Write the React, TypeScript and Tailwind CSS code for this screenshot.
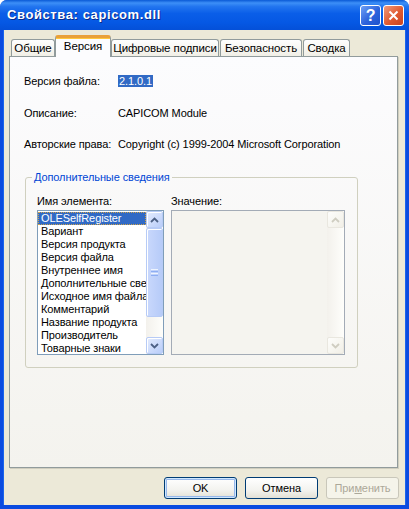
import type { ReactNode } from "react";

const tabs = [
  { label: "Общие", w: "w-[44px]" },
  { label: "Версия", w: "w-[56px]", active: true },
  { label: "Цифровые подписи", w: "w-[108px]" },
  { label: "Безопасность", w: "w-[82px]" },
  { label: "Сводка", w: "w-[47px]" },
];

const items = [
  "OLESelfRegister",
  "Вариант",
  "Версия продукта",
  "Версия файла",
  "Внутреннее имя",
  "Дополнительные сведения",
  "Исходное имя файла",
  "Комментарий",
  "Название продукта",
  "Производитель",
  "Товарные знаки",
];

function Chevron({ up, color }: { up?: boolean; color: string }) {
  return (
    <svg width="9" height="6" viewBox="0 0 9 6">
      <path
        d={up ? "M1 5 L4.5 1.5 L8 5" : "M1 1 L4.5 4.5 L8 1"}
        fill="none"
        stroke={color}
        strokeWidth="1.8"
      />
    </svg>
  );
}

function ArrowButton({ up, disabled }: { up?: boolean; disabled?: boolean }) {
  if (disabled) {
    return (
      <div className="h-[17px] flex items-center justify-center rounded-[2px] border border-[#e9e7df] bg-[linear-gradient(135deg,#fdfdfb,#f1efe7)]">
        <Chevron up={up} color="#cfcdc1" />
      </div>
    );
  }
  return (
    <div className="h-[17px] flex items-center justify-center rounded-[2px] border border-[#b7cbf6] bg-[linear-gradient(135deg,#e4ecfe,#b9cdf9)] shadow-[inset_1px_1px_0_#ffffff]">
      <Chevron up={up} color="#4d6185" />
    </div>
  );
}

function ScrollBar({ disabled }: { disabled?: boolean }) {
  return (
    <div className="w-[17px] flex flex-col bg-[linear-gradient(to_right,#f3f1ec,#fefefb)]">
      <ArrowButton up disabled={disabled} />
      <div className="flex-1 flex flex-col">
        {!disabled && (
          <div className="h-[89px] rounded-[2px] border border-[#b7cbf6] bg-[linear-gradient(to_right,#c9d8fc,#b6cbf8)] shadow-[inset_1px_1px_0_#ffffff] flex flex-col items-center justify-center gap-[1px]">
            <div className="w-[7px] h-[1px] bg-[#eef4fe]" />
            <div className="w-[7px] h-[1px] bg-[#8eaef2]" />
            <div className="w-[7px] h-[1px] bg-[#eef4fe]" />
            <div className="w-[7px] h-[1px] bg-[#8eaef2]" />
          </div>
        )}
      </div>
      <ArrowButton disabled={disabled} />
    </div>
  );
}

function Button({
  children,
  primary,
  disabled,
}: {
  children: ReactNode;
  primary?: boolean;
  disabled?: boolean;
}) {
  if (disabled) {
    return (
      <div className="w-[73px] h-[22px] flex items-center justify-center rounded-[3px] border border-[#c9c7ba] bg-[#f5f4ea] text-[#aca899]">
        {children}
      </div>
    );
  }
  return (
    <div
      className={`w-[73px] h-[22px] flex items-center justify-center rounded-[3px] border border-[#003c74] bg-[linear-gradient(to_bottom,#ffffff,#f3f3ef_60%,#e3e0d5)] text-black ${
        primary ? "shadow-[inset_0_0_0_1px_#cee7ff,inset_0_0_0_2px_#98b8ea]" : ""
      }`}
    >
      {children}
    </div>
  );
}

export default function App() {
  return (
    <div className="w-[409px] h-[509px] bg-white">
      <div className="w-[409px] h-[509px] flex flex-col rounded-t-[7px] bg-[#0a4be0] font-['Liberation_Sans',Arial,sans-serif] text-[11px] tracking-[-0.1px] text-black">
        {/* title bar */}
        <div className="h-[30px] shrink-0 flex items-center justify-between pl-[7px] pr-[5px] rounded-t-[7px] bg-[linear-gradient(to_bottom,#0a5ad6_0%,#3d8ff7_10%,#2275ef_22%,#0a5ee8_45%,#0558e4_75%,#0450d8_100%)]">
          <span className="text-white font-bold text-[13px] tracking-[0.6px] [text-shadow:1px_1px_0_#0a2a8a]">
            Свойства: capicom.dll
          </span>
          <div className="flex gap-[2px] mt-[1px]">
            <div className="w-[21px] h-[21px] rounded-[3px] border border-white bg-[linear-gradient(135deg,#6ea0f5,#2c62dc_55%,#1f52cc)] flex items-center justify-center text-white font-bold text-[16px] leading-none">
              ?
            </div>
            <div className="w-[21px] h-[21px] rounded-[3px] border border-white bg-[linear-gradient(135deg,#f09a7c,#e05a30_55%,#c9431f)] flex items-center justify-center">
              <svg width="11" height="11" viewBox="0 0 11 11">
                <path d="M1.5 1.5 L9.5 9.5 M9.5 1.5 L1.5 9.5" stroke="#ffffff" strokeWidth="2" />
              </svg>
            </div>
          </div>
        </div>

        {/* window body */}
        <div className="flex-1 mx-[4px] mb-[4px] bg-[#ece9d8] flex flex-col shadow-[-1px_0_0_#1a64ec,1px_0_0_#1a64ec]">
          {/* tabs */}
          <div className="flex items-end h-[26px] pl-[7px] gap-[1px]">
            {tabs.map((t) =>
              t.active ? (
                <div
                  key={t.label}
                  className={`${t.w} -mx-[1px] h-[22px] mb-[-1px] z-10 rounded-t-[3px] border-x border-[#919b9c] border-t-[3px] border-t-[#e9a03a] bg-[#fcfcfe] flex justify-center pt-[2px] leading-[13px] text-[11.5px] shadow-[inset_0_1px_0_#ffc73c]`}
                >
                  {t.label}
                </div>
              ) : (
                <div
                  key={t.label}
                  className={`${t.w} h-[17px] rounded-t-[3px] border-x border-t border-[#919b9c] bg-[linear-gradient(to_bottom,#fefefe,#f1efe6)] flex justify-center items-center leading-[13px] text-[11.5px]`}
                >
                  {t.label}
                </div>
              )
            )}
          </div>

          {/* page */}
          <div className="ml-[5px] w-[389px] h-[412px] border border-[#919b9c] bg-[linear-gradient(to_bottom,#fcfcfe,#f4f3ee)] shadow-[1px_1px_0_#d0cebf]">
            <div className="pt-[17px] pl-[14px]">
              <div className="flex h-[14px] items-center">
                <span className="w-[94px]">Версия файла:</span>
                <span className="bg-[#316ac5] text-white px-[1px] h-[12px] leading-[12px]">2.1.0.1</span>
              </div>
              <div className="flex h-[14px] items-center mt-[18px]">
                <span className="w-[94px]">Описание:</span>
                <span>CAPICOM Module</span>
              </div>
              <div className="flex h-[14px] items-center mt-[17px]">
                <span className="w-[94px]">Авторские права:</span>
                <span>Copyright (c) 1999-2004 Microsoft Corporation</span>
              </div>
            </div>

            <fieldset className="ml-[15px] mt-[20px] w-[333px] border border-[#d0d0bf] rounded-[3px] pl-[11px] pr-[12px] pb-[12px]">
              <legend className="ml-[-5px] px-[2px] leading-[13px] text-[#0046d5]">
                Дополнительные сведения
              </legend>
              <div className="flex gap-[7px] mt-[11px]">
                <div className="w-[127px]">
                  <div className="leading-[13px] mb-[2px]">Имя элемента:</div>
                  <div className="h-[145px] border border-[#7f9db9] bg-white flex overflow-hidden">
                    <div className="flex-1 overflow-hidden pt-[1px]">
                      {items.map((it, i) => (
                        <div
                          key={it}
                          className={`h-[13px] leading-[13px] pl-[3px] whitespace-nowrap overflow-hidden ${
                            i === 0 ? "bg-[#316ac5] text-white outline-1 outline-dotted outline-[#cfa34a] -outline-offset-1" : ""
                          }`}
                        >
                          {it}
                        </div>
                      ))}
                    </div>
                    <ScrollBar />
                  </div>
                </div>
                <div className="w-[174px]">
                  <div className="leading-[13px] mb-[2px]">Значение:</div>
                  <div className="h-[145px] border border-[#a3abb6] bg-[#f5f4ef] flex justify-end">
                    <ScrollBar disabled />
                  </div>
                </div>
              </div>
            </fieldset>
          </div>

          {/* dialog buttons */}
          <div className="flex justify-end gap-[8px] mt-[9px] mr-[6px]">
            <Button primary>OK</Button>
            <Button>Отмена</Button>
            <Button disabled>
              <span>
                При<span className="underline">м</span>енить
              </span>
            </Button>
          </div>
        </div>
      </div>
    </div>
  );
}
